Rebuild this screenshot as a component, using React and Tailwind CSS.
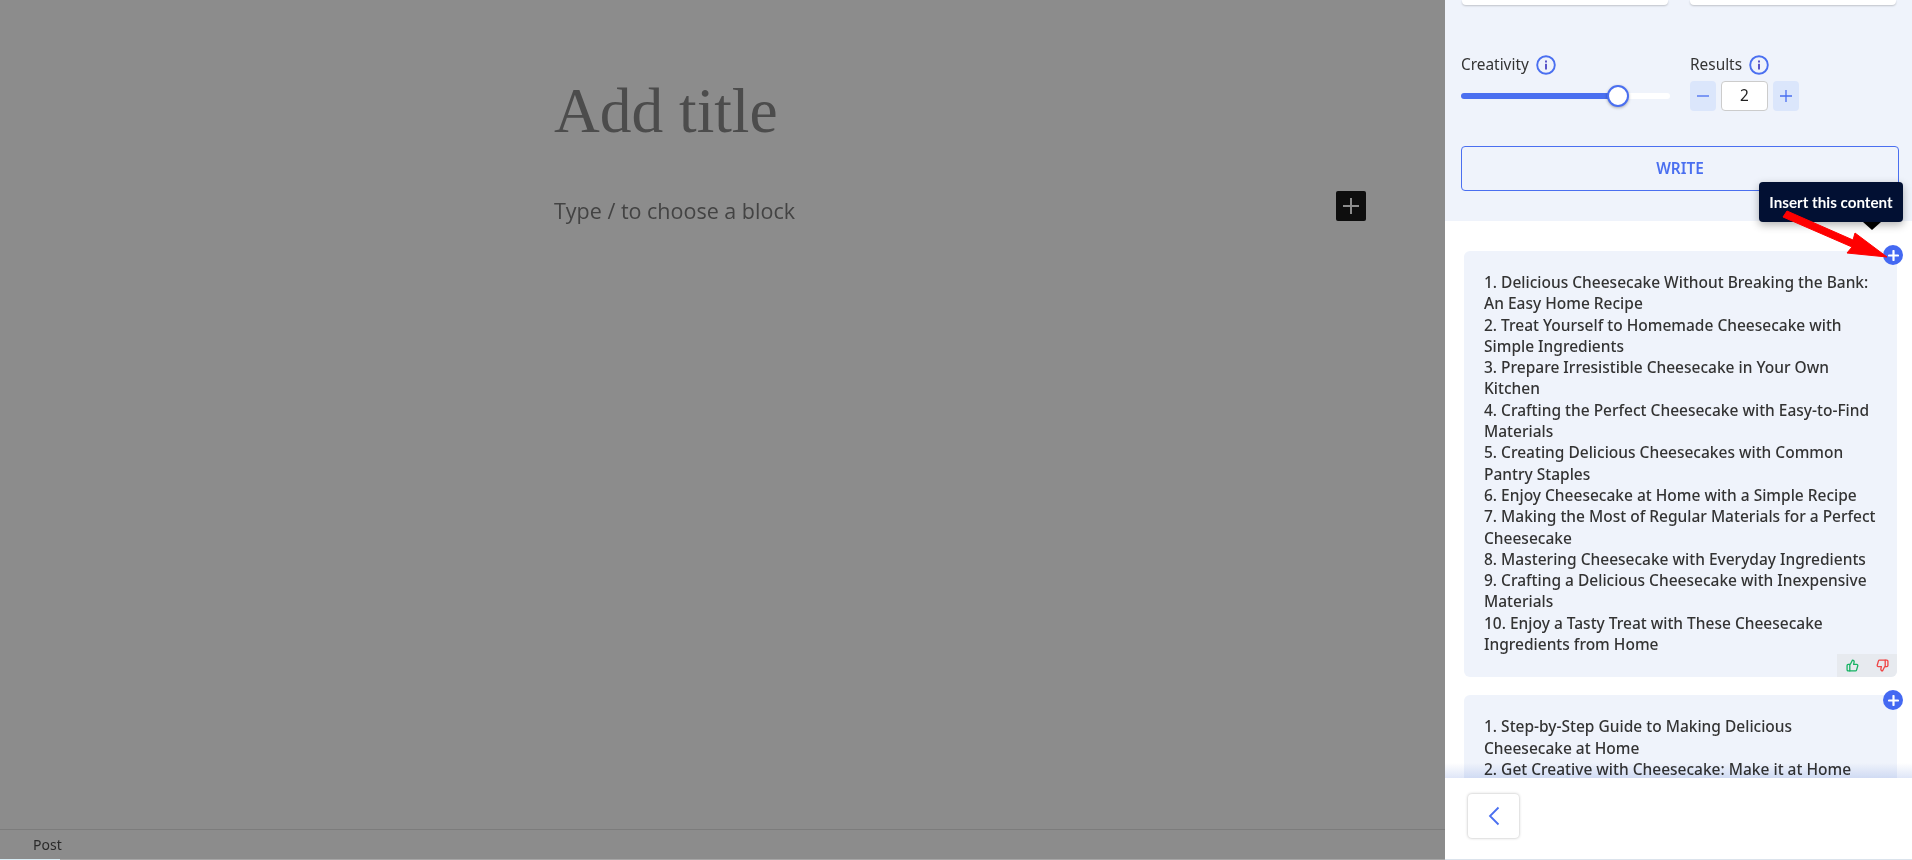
import React from "react";
import { ThumbsUp, ThumbsDown } from "lucide-react";

const lines1 = [
  "1. Delicious Cheesecake Without Breaking the Bank: An Easy Home Recipe",
  "2. Treat Yourself to Homemade Cheesecake with Simple Ingredients",
  "3. Prepare Irresistible Cheesecake in Your Own Kitchen",
  "4. Crafting the Perfect Cheesecake with Easy-to-Find Materials",
  "5. Creating Delicious Cheesecakes with Common Pantry Staples",
  "6. Enjoy Cheesecake at Home with a Simple Recipe",
  "7. Making the Most of Regular Materials for a Perfect Cheesecake",
  "8. Mastering Cheesecake with Everyday Ingredients",
  "9. Crafting a Delicious Cheesecake with Inexpensive Materials",
  "10. Enjoy a Tasty Treat with These Cheesecake Ingredients from Home",
];
const lines2 = [
  "1. Step-by-Step Guide to Making Delicious Cheesecake at Home",
  "2. Get Creative with Cheesecake: Make it at Home",
  "with Common Ingredients",
];

function Info() {
  return (
    <svg width="20" height="20" viewBox="0 0 20 20" fill="none">
      <circle cx="10" cy="10" r="8.800" stroke="#4a6ff0" strokeWidth="1.900" />
      <rect x="9" y="8.800" width="2" height="5.700" fill="#5a55c8" />
      <rect x="9" y="5.500" width="2" height="2" fill="#5a55c8" />
    </svg>
  );
}

function PlusBadge({ className }) {
  return (
    <div className={"absolute w-5 h-5 rounded-full bg-[#4469f2] flex items-center justify-center " + className}>
      <svg width="11" height="11" viewBox="0 0 11 11">
        <path d="M5.500 1v9M1 5.500h9" stroke="#fff" strokeWidth="2.200" strokeLinecap="round" />
      </svg>
    </div>
  );
}

export default function App() {
  return (
    <div className="relative flex w-[1912px] h-[860px] overflow-hidden font-['Noto_Sans',sans-serif] bg-[#8c8c8c]">
      <div className="relative flex flex-col w-[1445px] shrink-0 h-[860px]">
        <div className="flex-1 pl-[554px] pr-[79px] pt-[68px]">
          <div className="font-['Liberation_Serif',serif] font-light text-[63.400px] leading-[86px] text-[#4c4c4c]">Add title</div>
          <div className="flex items-start justify-between mt-[37px] h-[34px]">
            <span className="mt-[5px] text-[21.500px] leading-[29px] text-[#434343] font-['Open_Sans',sans-serif]">Type / to choose a block</span>
            <div className="w-[30px] h-[30px] rounded-[2px] bg-[#0e0e0e] flex items-center justify-center">
              <svg width="16" height="16" viewBox="0 0 16 16">
                <path d="M8 0v16M0 8h16" stroke="#8c8c8c" strokeWidth="2" />
              </svg>
            </div>
          </div>
        </div>
        <div className="h-[30px] border-t border-[#7c7c7c] pl-[33px] text-[14px] leading-[30px] text-[#2a2a2a]">Post</div>
        <div className="h-px flex">
          <div className="w-[60px] bg-[#d9eef6]" />
          <div className="flex-1 bg-[#a6a6a6]" />
        </div>
      </div>

      <div className="relative w-[467px] h-[860px] bg-white flex flex-col">
        <div className="h-[221px] shrink-0 bg-[#eff3fb] px-[16px] flex flex-col">
          <div className="flex gap-[22px] h-[5px] pl-px">
            <div className="w-[207px] bg-white rounded-b-[4px] shadow-[0_1px_2px_rgba(0,0,0,0.2)]" />
            <div className="w-[207px] bg-white rounded-b-[4px] shadow-[0_1px_2px_rgba(0,0,0,0.2)]" />
          </div>
          <div className="flex gap-[20px] mt-[50px]">
            <div className="w-[209px]">
              <div className="flex items-center gap-[7px] h-[20px] text-[15.400px] text-[#333]">
                Creativity <Info />
              </div>
              <div className="relative h-[6px] mt-[18px] rounded-full bg-white">
                <div className="h-[6px] w-[155px] rounded-full bg-[#4a6ff0]" />
                <div className="absolute left-[146px] top-[-8px] w-[22px] h-[22px] rounded-full bg-white border-2 border-[#4a6ff0] shadow-[0_1px_3px_rgba(0,0,0,0.3)]" />
              </div>
            </div>
            <div>
              <div className="flex items-center gap-[7px] h-[20px] text-[15.400px] text-[#333]">
                Results <Info />
              </div>
              <div className="flex items-center gap-[5px] mt-[6px]">
                <div className="w-[26px] h-[30px] rounded-[4px] bg-[#dbe6fb] flex items-center justify-center">
                  <svg width="14" height="14" viewBox="0 0 14 14"><path d="M1 7h12" stroke="#4a6ff0" strokeWidth="1.300" /></svg>
                </div>
                <div className="w-[47px] h-[30px] rounded-[4px] bg-white border border-[#ccc] text-[15.400px] text-[#222] flex items-center justify-center">2</div>
                <div className="w-[26px] h-[30px] rounded-[4px] bg-[#dbe6fb] flex items-center justify-center">
                  <svg width="14" height="14" viewBox="0 0 14 14"><path d="M1 7h12M7 1v12" stroke="#4a6ff0" strokeWidth="1.300" /></svg>
                </div>
              </div>
            </div>
          </div>
          <div className="mt-[35px] h-[45px] w-[438px] rounded-[4px] border border-[#4a6ff0] pt-px text-[15.400px] font-semibold text-[#4a6ff0] flex items-center justify-center">WRITE</div>
        </div>

        <div className="flex-1 relative overflow-hidden">
          <div className="pl-[19px] pr-[15px] pt-[30px] flex flex-col gap-[18px]">
            <div className="relative rounded-[6px] bg-[#eff3fb] pl-[20px] pr-[20px] pt-[21px] pb-[22px] text-[15.500px] font-medium leading-[21.300px] text-[#333]">
              {lines1.map((l) => <div key={l}>{l}</div>)}
              <div className="absolute right-0 bottom-0 w-[60px] h-[23px] rounded-br-[6px] bg-[#e7eaef] flex items-center gap-[17px] pl-[9px]">
                <ThumbsUp size={13} color="#16b364" strokeWidth={2.4} />
                <ThumbsDown size={13} color="#ef4444" strokeWidth={2.4} />
              </div>
            </div>
            <div className="rounded-[6px] bg-[#eff3fb] pl-[20px] pr-[20px] pt-[21px] pb-[22px] text-[15.500px] font-medium leading-[21.300px] text-[#333]">
              {lines2.map((l) => <div key={l}>{l}</div>)}
            </div>
          </div>
          <div className="absolute left-0 right-0 bottom-[82px] h-[15px] bg-gradient-to-b from-white to-[#dfe6f7] mix-blend-multiply" />
          <div className="absolute left-0 right-0 bottom-0 h-[82px] bg-white pl-[23px] pt-[16px] border-b border-[#dbe3ec]">
            <div className="w-[51px] h-[44px] rounded-[4px] bg-white shadow-[0_0_3px_rgba(0,0,0,0.3)] flex items-center justify-center">
              <svg width="14" height="20" viewBox="0 0 14 20" fill="none"><path d="M11.500 1.500 3 10l8.500 8.500" stroke="#4a6ff0" strokeWidth="1.800" /></svg>
            </div>
          </div>
        </div>

        <PlusBadge className="left-[438px] top-[245px]" />
        <PlusBadge className="left-[438px] top-[690px]" />
        <div className="absolute left-[314px] top-[182px] w-[144px] h-[40px] rounded-[4px] bg-[#021033] text-white text-[15.200px] font-bold font-['Lato',sans-serif] flex items-center justify-center shadow-[0_3px_8px_rgba(0,0,0,0.3)]">
          Insert this content
        </div>
        <div className="absolute left-[418px] top-[222px] w-0 h-0 border-l-[9px] border-r-[9px] border-t-[8px] border-l-transparent border-r-transparent border-t-black" />
      </div>

      <svg className="absolute left-[1780px] top-[205px]" width="120" height="60" viewBox="0 0 120 60" fill="none">
        <path d="M7 6 L73 35 L75 28 L107 52 L67 48 L72 42 L3 12 Z" fill="#ff0000" stroke="#ff0000" strokeWidth="1" strokeLinejoin="round" />
      </svg>
    </div>
  );
}
